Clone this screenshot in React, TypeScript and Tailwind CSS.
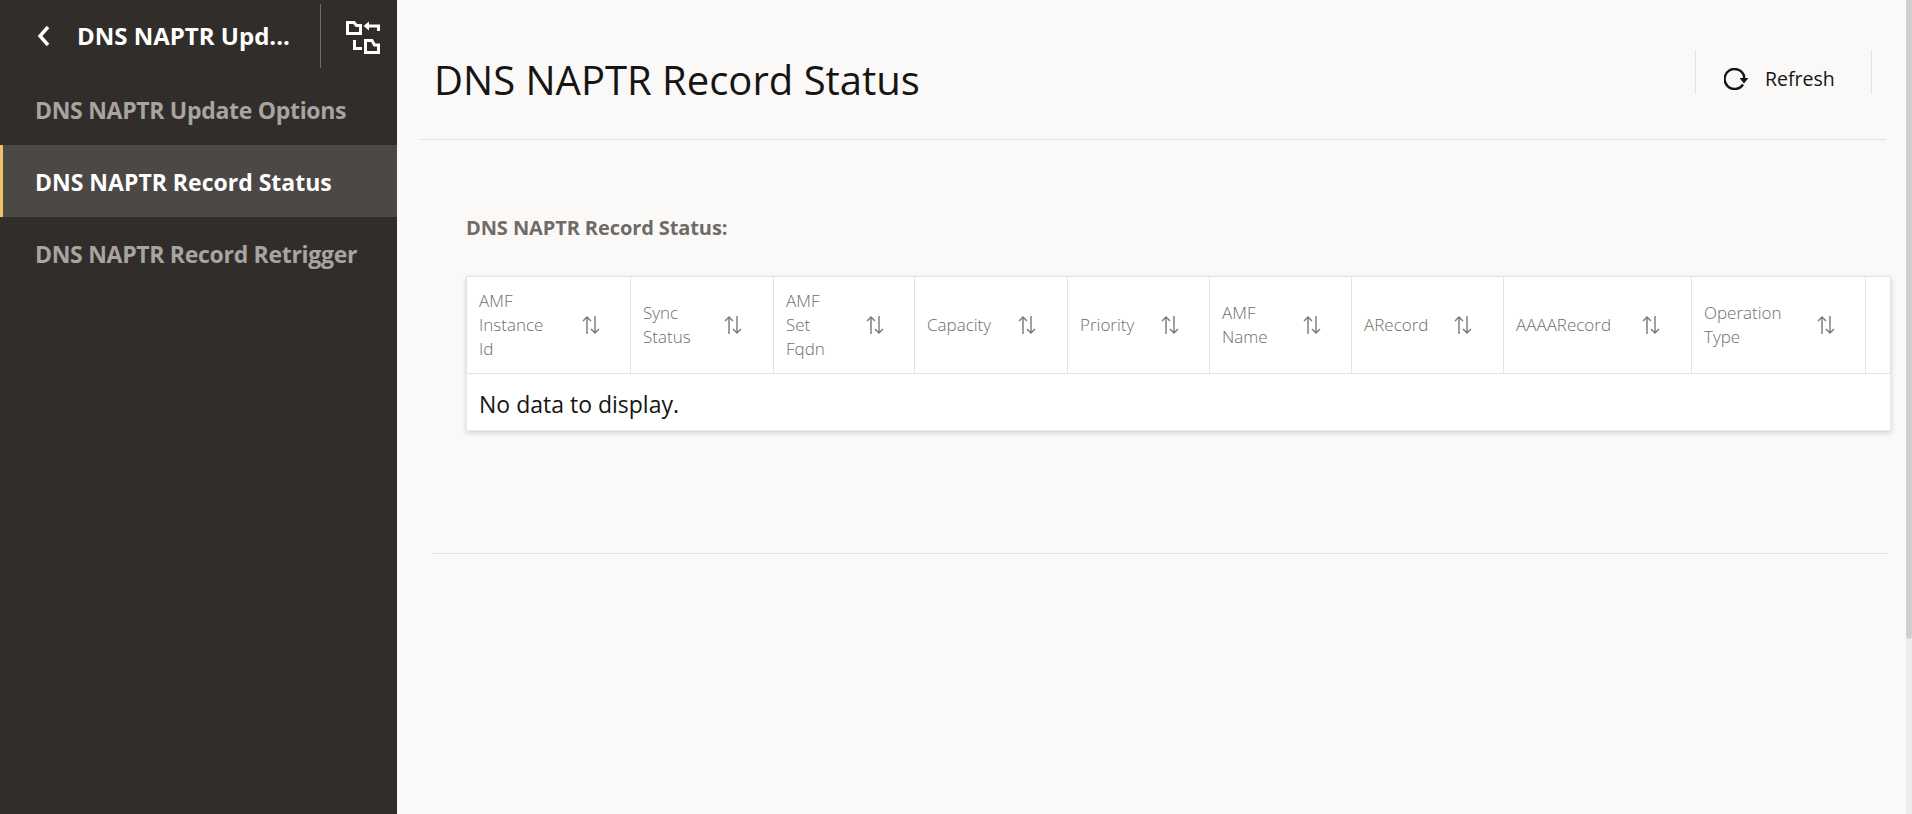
import React from 'react';

const font = "font-['Open_Sans','Noto_Sans',sans-serif]";

const columns = [
  { lines: ['AMF', 'Instance', 'Id'], width: 'w-[164px]', label: 'w-[103px]' },
  { lines: ['Sync', 'Status'], width: 'w-[143px]', label: 'w-[81px]' },
  { lines: ['AMF', 'Set', 'Fqdn'], width: 'w-[141px]', label: 'w-[80px]' },
  { lines: ['Capacity'], width: 'w-[153px]', label: 'w-[91px]' },
  { lines: ['Priority'], width: 'w-[142px]', label: 'w-[81px]' },
  { lines: ['AMF', 'Name'], width: 'w-[142px]', label: 'w-[81px]' },
  { lines: ['ARecord'], width: 'w-[152px]', label: 'w-[90px]' },
  { lines: ['AAAARecord'], width: 'w-[188px]', label: 'w-[126px]' },
  { lines: ['Operation', 'Type'], width: 'w-[174px]', label: 'w-[113px]' },
];

const SortIcon = () => (
  <svg width="18" height="20" viewBox="0 0 18 20" fill="none" stroke="#7a7875" strokeWidth="1.4" className="shrink-0">
    <path d="M5 19V2M1 6l4-4 4 4" />
    <path d="M13 1v17M9 14l4 4 4-4" />
  </svg>
);

const SwapIcon = () => (
  <svg width="36" height="36" viewBox="0 0 36 36" fill="none" stroke="#ffffff" strokeWidth="3">
    <path d="M2.5 3.5H9l2.5 3h4v8h-13z" />
    <path d="M18.5 7L24 2.5v9z" fill="#ffffff" stroke="none" />
    <path d="M24 7h9.5v5" />
    <path d="M9.5 21v8.5H17" />
    <path d="M20.5 21.5H27l2.5 4.5h4v7.5h-13z" />
  </svg>
);

const RefreshIcon = () => (
  <svg width="24" height="22" viewBox="0 0 24 22" fill="none" className="shrink-0">
    <path d="M19 16.5A10 10 0 1 1 20 7.5V11" stroke="#161513" strokeWidth="2.4" />
    <path d="M15.5 10h9l-4.5 5.5z" fill="#161513" />
  </svg>
);

const App = () => {
  return (
    <div className={`flex h-[814px] w-full overflow-hidden bg-[#fbf9f8] ${font}`}>
      <aside className="w-[397px] shrink-0 bg-[#312d2a]">
        <div className="flex h-[72px] items-center">
          <svg width="14" height="22" viewBox="0 0 14 22" fill="none" stroke="#ffffff" strokeWidth="3.4" className="ml-[37px] shrink-0">
            <path d="M11 2L3 11l8 9" />
          </svg>
          <div className="ml-[26px] w-[243px] text-[24px] font-bold text-white">DNS NAPTR Upd...</div>
          <div className="mt-[-1px] h-[64px] w-px bg-[#6f6c69]" />
          <div className="ml-[24px] mt-[1px]">
            <SwapIcon />
          </div>
        </div>
        <div className="flex h-[73px] items-center pt-[4px] pl-[35px] text-[23px] font-bold tracking-[-0.3px] text-[#a8a4a0]">DNS NAPTR Update Options</div>
        <div className="flex h-[72px] items-center border-l-[3px] border-[#eec566] bg-[#4c4845] pt-[2px] pl-[32px] text-[23px] font-bold text-white">DNS NAPTR Record Status</div>
        <div className="flex h-[72px] items-center pt-[2px] pl-[35px] text-[23px] font-bold tracking-[-0.3px] text-[#a8a4a0]">DNS NAPTR Record Retrigger</div>
      </aside>

      <main className="min-w-0 flex-1">
        <div className="ml-[23px] mr-[20px] flex h-[140px] items-start justify-between border-b border-[#e5e3e1] pt-[50px]">
          <h1 className="ml-[14px] text-[40px] leading-[60px] font-normal text-[#161513]">DNS NAPTR Record Status</h1>
          <div className="mr-[14px] flex h-[44px] w-[177px] items-center border-x border-[#e4e2e0] pt-[13px] pl-[28px] text-[19.5px] text-[#161513]">
            <RefreshIcon />
            <span className="ml-[17px]">Refresh</span>
          </div>
        </div>

        <div className="ml-[36px] mr-[19px] flex h-[414px] flex-col border-b border-[#e5e3e1]">
          <div className="mt-[74px] ml-[33px] text-[20px] leading-[28px] font-bold tracking-[-0.1px] text-[#6f6b67]">DNS NAPTR Record Status:</div>
          <div className="mt-[34px] mr-[-4px] ml-[33px] bg-white shadow-[0_2px_5px_rgba(0,0,0,0.16)]">
            <div className="flex h-[98px] border border-[#e4e2e0]">
              {columns.map((col) => (
                <div key={col.lines.join('-')} className={`flex shrink-0 items-center border-r border-[#e4e2e0] pl-[12px] text-[17px] leading-[24px] font-light text-[#6f6d6a] ${col.width}`}>
                  <div className={`shrink-0 ${col.label}`}>
                    {col.lines.map((line) => (
                      <div key={line}>{line}</div>
                    ))}
                  </div>
                  <SortIcon />
                </div>
              ))}
            </div>
            <div className="flex h-[57px] items-center border-x border-b border-[#ececea] pt-[4px] pl-[12px] text-[23px] text-[#161513]">No data to display.</div>
          </div>
        </div>
      </main>

      <div className="flex w-[6px] shrink-0 flex-col bg-[#efeeec]">
        <div className="h-[639px] rounded-b-[3px] bg-[#cfcfcf]" />
      </div>
    </div>
  );
};

export default App;
